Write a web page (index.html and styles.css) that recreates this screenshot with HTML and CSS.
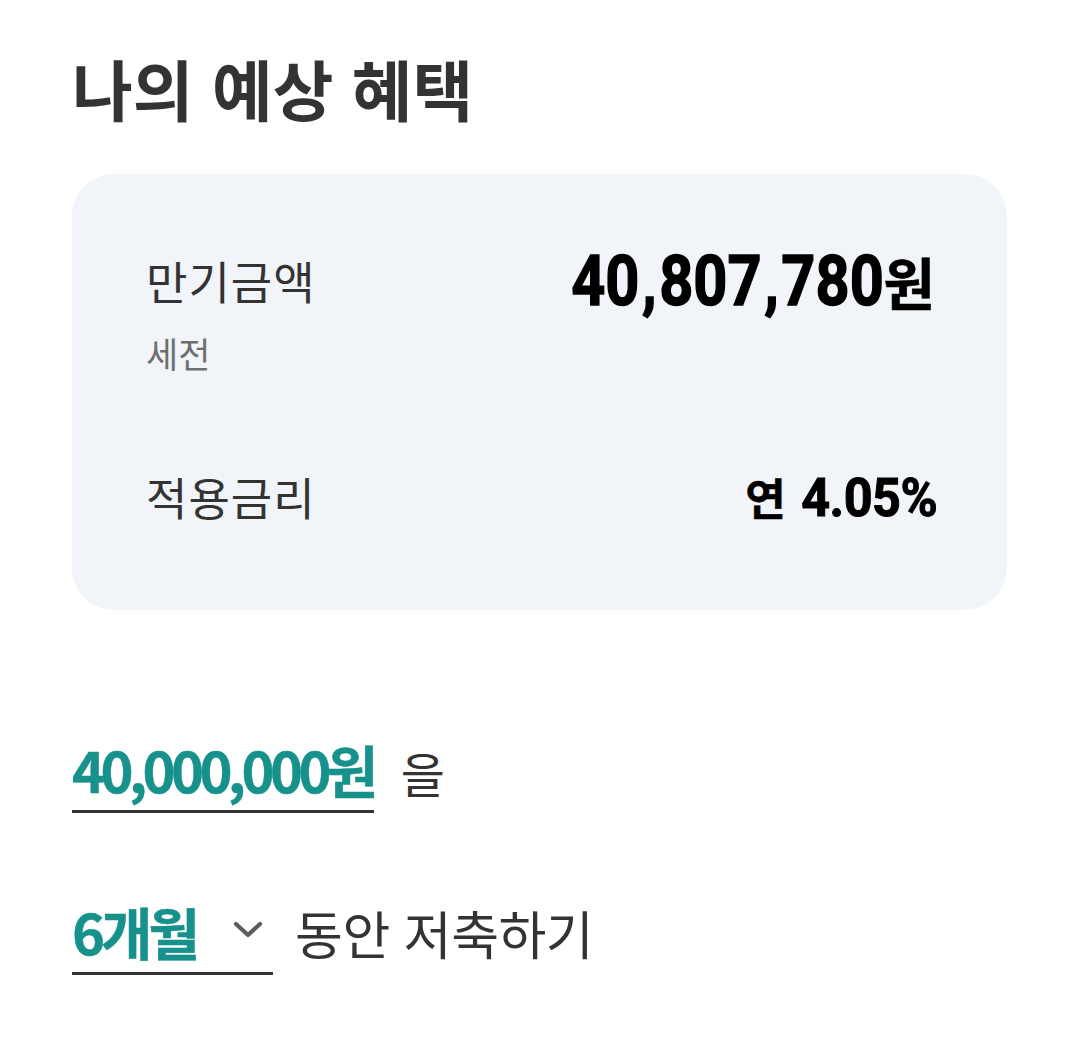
FILE: index.html
```html
<!DOCTYPE html>
<html lang="ko">
<head>
<meta charset="utf-8">
<title>나의 예상 혜택</title>
<link rel="stylesheet" href="styles.css">
</head>
<body>
<main class="page">
  <h1 class="title">나의 예상 혜택</h1>
  <section class="card">
    <div class="row">
      <div class="label-group">
        <div class="label">만기금액</div>
        <div class="sub">세전</div>
      </div>
      <div class="amount"><span class="num big">40<span class="comma">,</span>807<span class="comma">,</span>780</span><span class="won">원</span></div>
    </div>
    <div class="row row-rate">
      <div class="label">적용금리</div>
      <div class="rate"><span class="yeon">연</span><span class="num mid">4.05%</span></div>
    </div>
  </section>
  <div class="sentence first">
    <span class="field">40,000,000원</span>
    <span class="plain small">을</span>
  </div>
  <div class="sentence second">
    <span class="field select">6개월<svg class="chev" width="30" height="17" viewBox="0 0 30 17" aria-hidden="true"><path d="M3 3 L15 14 L27 3" fill="none" stroke="#5c5c5c" stroke-width="4.2" stroke-linecap="round" stroke-linejoin="round"/></svg></span>
    <span class="plain">동안 저축하기</span>
  </div>
</main>
</body>
</html>
```

FILE: styles.css
```css
* { box-sizing: border-box; }
html, body { margin: 0; padding: 0; background: #ffffff; }
body {
  font-family: "Noto Sans CJK KR", "Noto Sans", sans-serif;
  color: #333333;
}
.page {
  padding: 48px 73px 0 72px;
}
.title {
  margin: 0;
  font-size: 66px;
  font-weight: 700;
  line-height: 79px;
  letter-spacing: 0;
  color: #333333;
}
.card {
  margin-top: 47px;
  background: #f1f4f8;
  border-radius: 42px;
  padding: 77px 72px 82px 74px;
  display: flex;
  flex-direction: column;
  gap: 92px;
}
.row {
  display: flex;
  justify-content: space-between;
  align-items: flex-start;
}
.label {
  font-size: 45px;
  line-height: 60px;
  letter-spacing: 1px;
  color: #333333;
}
.sub {
  margin-top: 20px;
  font-size: 35px;
  line-height: 44px;
  letter-spacing: 0;
  color: #6f6f6f;
}
.amount {
  display: flex;
  align-items: baseline;
  line-height: 60px;
  color: #000000;
}
.num {
  display: inline-block;
  font-family: Roboto, "Liberation Sans", sans-serif;
  font-weight: 700;
  transform-origin: right center;
  -webkit-text-stroke: 1.4px #000000;
}
.big {
  font-size: 70px;
  transform: scaleX(0.85);
  margin-right: 0;
}
.comma { margin: 0 3px; }
.won {
  font-size: 56px;
  font-weight: 700;
  letter-spacing: -2px;
  margin-right: 2px;
  -webkit-text-stroke: 0.6px #000000;
}
.rate {
  display: flex;
  align-items: baseline;
  gap: 8px;
  line-height: 60px;
  color: #000000;
}
.yeon {
  font-size: 44px;
  font-weight: 700;
  -webkit-text-stroke: 0.5px #000000;
}
.mid {
  font-size: 53px;
  transform: scaleX(0.95);
  letter-spacing: -0.5px;
  margin-right: -2px;
  -webkit-text-stroke: 1px #000000;
}
.sentence {
  display: flex;
  align-items: baseline;
  gap: 27px;
}
.sentence.first { margin-top: 127px; }
.sentence.second { margin-top: 86px; gap: 22px; }
.field {
  display: inline-flex;
  align-items: center;
  border-bottom: 3px solid #333333;
  padding-bottom: 9px;
  font-size: 56px;
  line-height: 64px;
  font-weight: 700;
  letter-spacing: -4.6px;
  color: #16918c;
  -webkit-text-stroke: 0.5px #16918c;
}
.select { padding-right: 10px; letter-spacing: -4px; }
.chev { margin-left: 37px; margin-top: -4px; }
.plain {
  font-size: 52px;
  line-height: 64px;
  color: #333333;
  letter-spacing: -0.5px;
}
.plain.small { font-size: 48px; }
```
